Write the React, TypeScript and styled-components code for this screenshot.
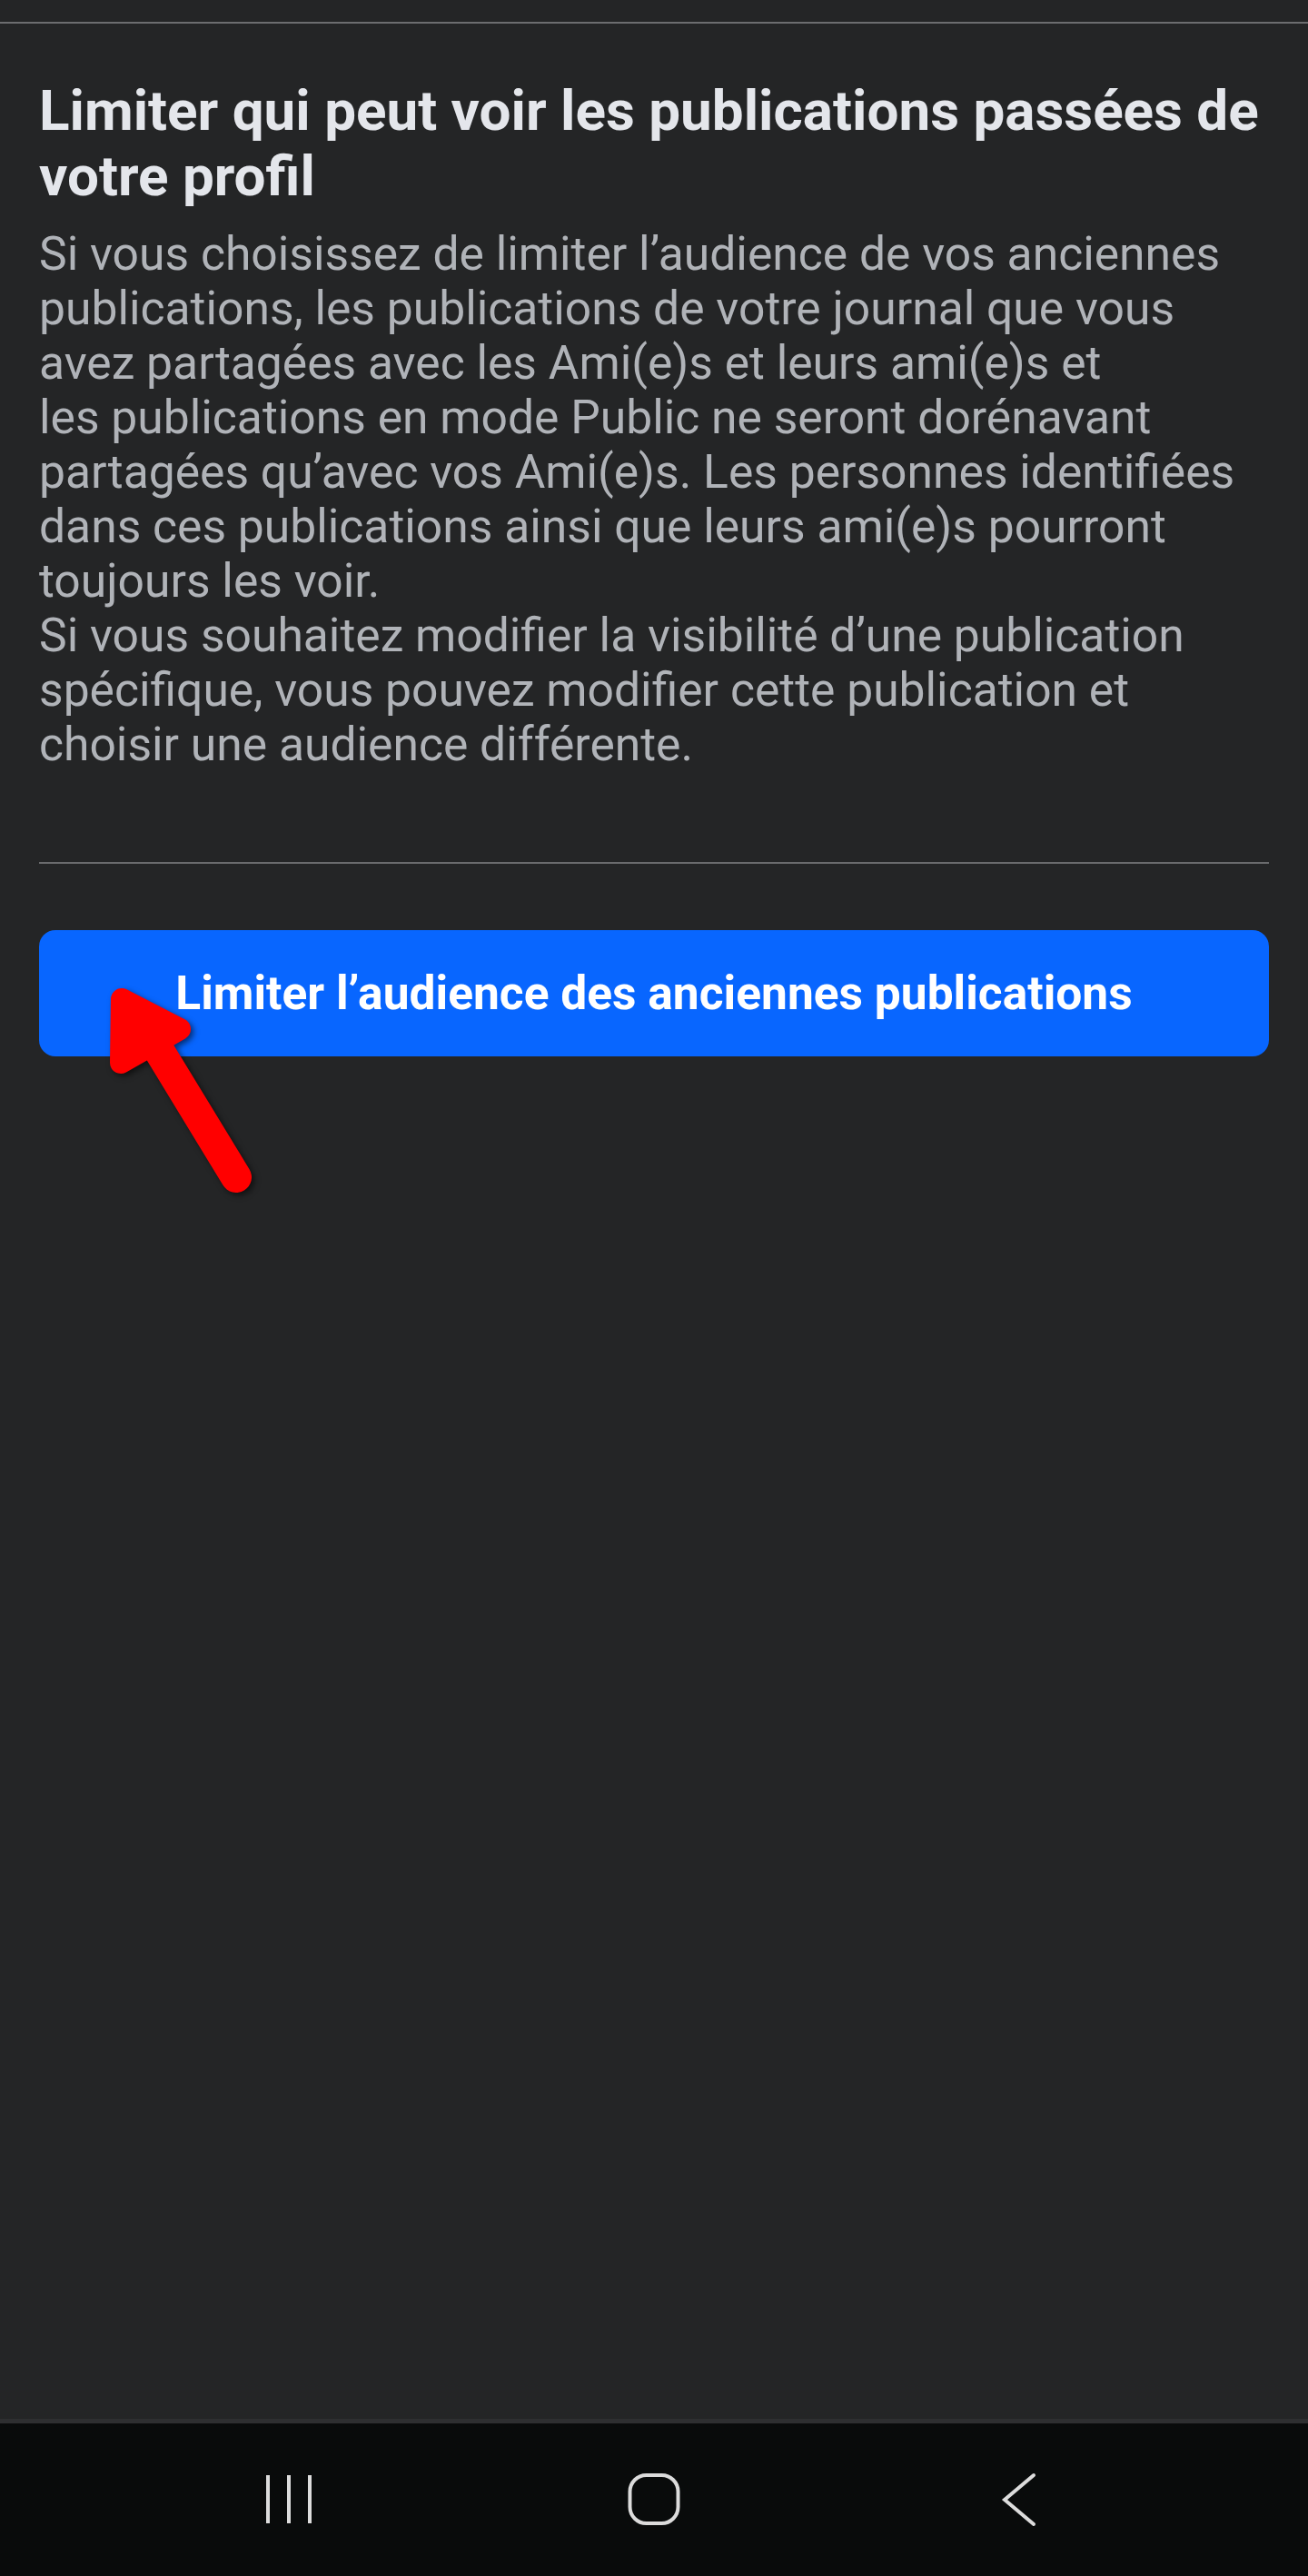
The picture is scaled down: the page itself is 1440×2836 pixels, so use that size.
import styled, { createGlobalStyle } from 'styled-components';

const GlobalStyle = createGlobalStyle`
  html, body {
    margin: 0;
    padding: 0;
    background: #242526;
  }
  body {
    font-family: Roboto, 'Noto Sans', 'Liberation Sans', sans-serif;
  }
  * {
    box-sizing: border-box;
  }
`;

const Screen = styled.div`
  width: 1440px;
  height: 2836px;
  display: flex;
  flex-direction: column;
  background: #242526;
`;

const Content = styled.main`
  flex: 1;
  display: flex;
  flex-direction: column;
`;

const TopRule = styled.div`
  margin-top: 24px;
  height: 2px;
  background: #6c6d6f;
`;

const Section = styled.section`
  padding: 0 43px;
  display: flex;
  flex-direction: column;
`;

const Title = styled.h1`
  margin: 60px 0 0;
  font-size: 62px;
  line-height: 72px;
  font-weight: 700;
  color: #e4e6eb;
  white-space: nowrap;
`;

const Body = styled.p`
  margin: 20px 0 0;
  font-size: 51.6px;
  line-height: 60px;
  font-weight: 400;
  color: #b0b3b8;
  white-space: nowrap;
`;

const Divider = styled.hr`
  margin: 99px 0 0;
  border: none;
  height: 2px;
  background: #6a6b6d;
`;

const ButtonWrap = styled.div`
  position: relative;
  margin-top: 73px;
`;

const PrimaryButton = styled.button`
  width: 100%;
  height: 139px;
  border: none;
  border-radius: 18px;
  background: #0866ff;
  color: #ffffff;
  font-family: Roboto, 'Noto Sans', 'Liberation Sans', sans-serif;
  font-size: 51.5px;
  font-weight: 700;
  display: flex;
  align-items: center;
  justify-content: center;
  cursor: pointer;
`;

const Arrow = styled.svg`
  position: absolute;
  left: 60px;
  top: 50px;
  pointer-events: none;
  filter: drop-shadow(3px 3px 3px rgba(0, 0, 0, 0.55));
`;

const NavBar = styled.nav`
  height: 173px;
  border-top: 5px solid #2e2f31;
  background: #090b0b;
  display: flex;
  align-items: center;
  justify-content: center;
  gap: 282px;
`;

const NavButton = styled.div`
  width: 120px;
  height: 120px;
  display: flex;
  align-items: center;
  justify-content: center;
  color: #dcdcdc;
`;

function RecentsIcon() {
    return (
        <svg width="60" height="60" viewBox="0 0 60 60" fill="none" stroke="currentColor" strokeWidth="4">
            <line x1="7" y1="3" x2="7" y2="56" />
            <line x1="30" y1="3" x2="30" y2="56" />
            <line x1="53" y1="3" x2="53" y2="56" />
        </svg>
    )
}

function HomeIcon() {
    return (
        <svg width="60" height="60" viewBox="0 0 60 60" fill="none" stroke="currentColor" strokeWidth="4">
            <rect x="3.5" y="3" width="53" height="53" rx="18" />
        </svg>
    )
}

function BackIcon() {
    return (
        <svg width="60" height="60" viewBox="0 0 60 60" fill="none" stroke="currentColor" strokeWidth="4" strokeLinecap="round">
            <polyline points="46,3 14,30 46,57" />
        </svg>
    )
}

function App() {
    return (
        <>
            <GlobalStyle />
            <Screen>
                <Content>
                    <TopRule />
                    <Section>
                        <Title>
                            Limiter qui peut voir les publications passées de<br />
                            votre profil
                        </Title>
                        <Body>
                            Si vous choisissez de limiter l’audience de vos anciennes<br />
                            publications, les publications de votre journal que vous<br />
                            avez partagées avec les Ami(e)s et leurs ami(e)s et<br />
                            les publications en mode Public ne seront dorénavant<br />
                            partagées qu’avec vos Ami(e)s. Les personnes identifiées<br />
                            dans ces publications ainsi que leurs ami(e)s pourront<br />
                            toujours les voir.<br />
                            Si vous souhaitez modifier la visibilité d’une publication<br />
                            spécifique, vous pouvez modifier cette publication et<br />
                            choisir une audience différente.
                        </Body>
                        <Divider />
                        <ButtonWrap>
                            <PrimaryButton>Limiter l’audience des anciennes publications</PrimaryButton>
                            <Arrow width="240" height="300" viewBox="103 1074 240 300">
                                <polygon
                                    points="134,1100 198,1133 133,1170"
                                    fill="#ff0000"
                                    stroke="#ff0000"
                                    strokeWidth="24"
                                    strokeLinejoin="round"
                                />
                                <line
                                    x1="168"
                                    y1="1145"
                                    x2="260"
                                    y2="1296"
                                    stroke="#ff0000"
                                    strokeWidth="34"
                                    strokeLinecap="round"
                                />
                            </Arrow>
                        </ButtonWrap>
                    </Section>
                </Content>
                <NavBar>
                    <NavButton><RecentsIcon /></NavButton>
                    <NavButton><HomeIcon /></NavButton>
                    <NavButton><BackIcon /></NavButton>
                </NavBar>
            </Screen>
        </>
    )
}

export default App;
